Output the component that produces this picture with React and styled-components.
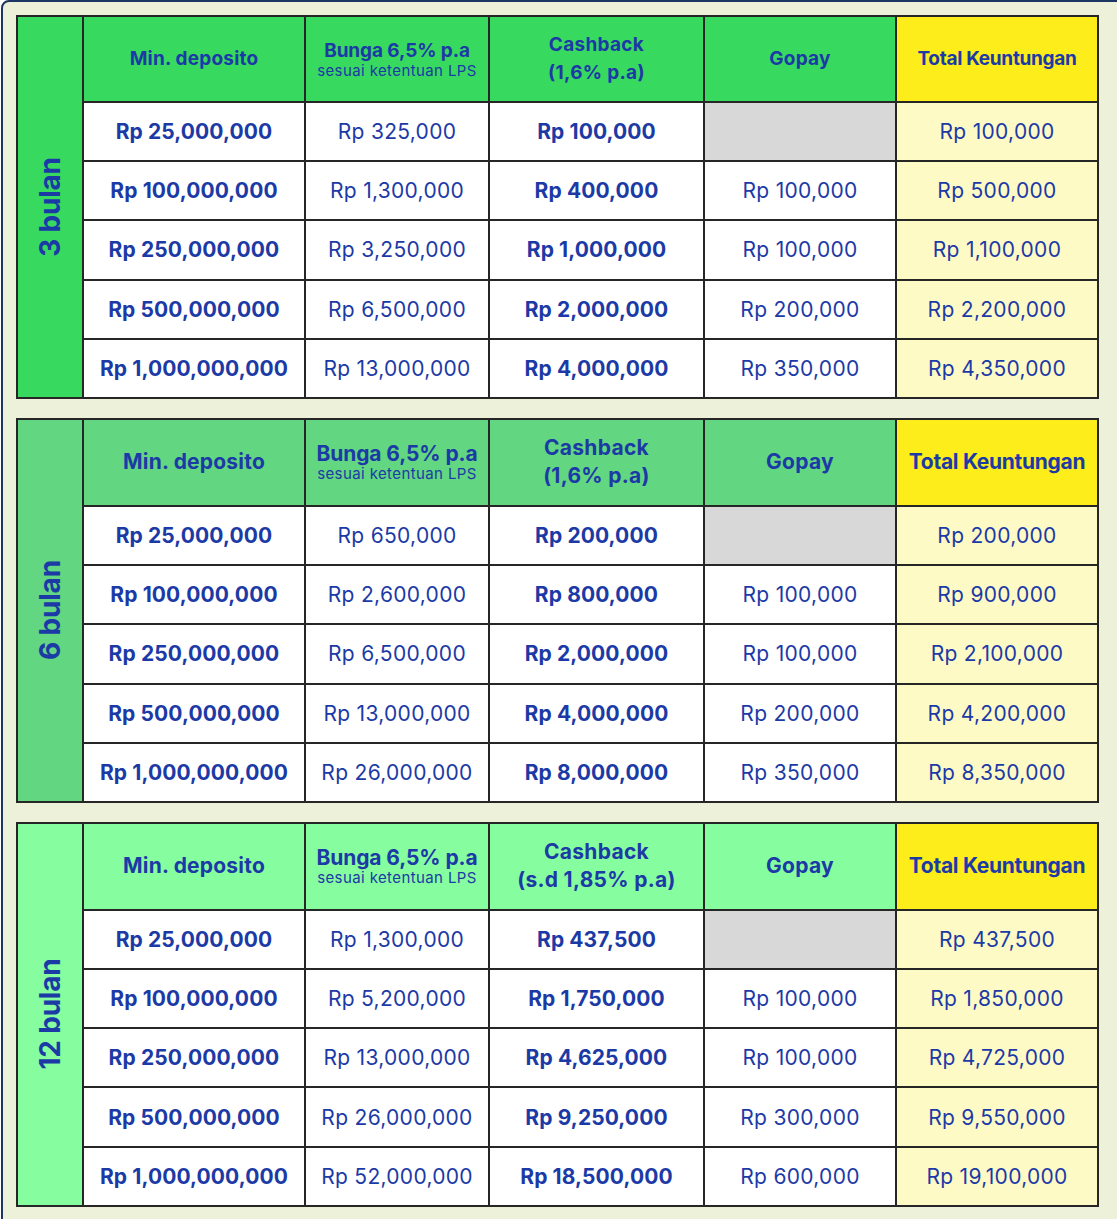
import React from 'react';
import styled, { createGlobalStyle } from 'styled-components';

const GlobalStyle = createGlobalStyle`
	html, body {
		margin: 0;
		padding: 0;
		background: #ffffff;
	}
	body {
		font-family: Inter, 'Noto Sans', 'Liberation Sans', sans-serif;
		color: #1c3aa6;
	}
`;

const Frame = styled.div`
	margin-left: 1px;
	width: 1109px;
	border: 2px solid #1d3563;
	border-radius: 8px;
	background: #edf1d9;
	padding: 13px 0 40px 13px;
	display: flex;
	flex-direction: column;
	gap: 19px;
`;

const Table = styled.div`
	display: grid;
	width: 1083px;
	grid-template-columns: 64px 220px 182px 213px 190px 200px;
	grid-template-rows: ${(p) => p.$head}px repeat(5, 57.2px);
	gap: 2px;
	padding: 2px;
	box-sizing: border-box;
	background: #262626;
`;

const Label = styled.div`
	grid-row: 1 / span 6;
	background: ${(p) => p.$bg};
	display: flex;
	align-items: center;
	justify-content: center;
	overflow: hidden;
`;

const LabelText = styled.span`
	display: block;
	transform: rotate(-90deg);
	white-space: nowrap;
	font-size: 28px;
	font-weight: 700;
	letter-spacing: -0.2px;
`;

const Head = styled.div`
	background: ${(p) => p.$bg};
	display: flex;
	flex-direction: column;
	align-items: center;
	justify-content: center;
	text-align: center;
	font-weight: 700;
	font-size: ${(p) => p.$size}px;
	line-height: 28px;
`;

const HeadLine = styled.span`
	line-height: ${(p) => p.$lh || 28}px;
	letter-spacing: ${(p) => p.$ls || 0}px;
`;

const Sub = styled.span`
	font-size: 15px;
	font-weight: 400;
	line-height: 18px;
	letter-spacing: 0.4px;
`;

const Cell = styled.div`
	background: ${(p) => p.$bg || '#ffffff'};
	display: flex;
	align-items: center;
	justify-content: center;
	font-size: 21px;
	font-weight: ${(p) => (p.$bold ? 700 : 400)};
	letter-spacing: ${(p) => (p.$bold ? 0.1 : 0.3)}px;
	white-space: nowrap;
`;

const tables = [
	{
		label: '3 bulan',
		green: '#38d95f',
		head: 84,
		headSize: 19,
		cashback: '(1,6% p.a)',
		rows: [
			['25,000,000', '325,000', '100,000', null, '100,000'],
			['100,000,000', '1,300,000', '400,000', '100,000', '500,000'],
			['250,000,000', '3,250,000', '1,000,000', '100,000', '1,100,000'],
			['500,000,000', '6,500,000', '2,000,000', '200,000', '2,200,000'],
			['1,000,000,000', '13,000,000', '4,000,000', '350,000', '4,350,000'],
		],
	},
	{
		label: '6 bulan',
		green: '#62d680',
		head: 85,
		headSize: 21,
		cashback: '(1,6% p.a)',
		rows: [
			['25,000,000', '650,000', '200,000', null, '200,000'],
			['100,000,000', '2,600,000', '800,000', '100,000', '900,000'],
			['250,000,000', '6,500,000', '2,000,000', '100,000', '2,100,000'],
			['500,000,000', '13,000,000', '4,000,000', '200,000', '4,200,000'],
			['1,000,000,000', '26,000,000', '8,000,000', '350,000', '8,350,000'],
		],
	},
	{
		label: '12 bulan',
		green: '#86fd9e',
		head: 85,
		headSize: 21,
		cashback: '(s.d 1,85% p.a)',
		rows: [
			['25,000,000', '1,300,000', '437,500', null, '437,500'],
			['100,000,000', '5,200,000', '1,750,000', '100,000', '1,850,000'],
			['250,000,000', '13,000,000', '4,625,000', '100,000', '4,725,000'],
			['500,000,000', '26,000,000', '9,250,000', '300,000', '9,550,000'],
			['1,000,000,000', '52,000,000', '18,500,000', '600,000', '19,100,000'],
		],
	},
];

const YELLOW = '#fced1b';
const PALE = '#fefac6';
const GRAY = '#d8d8d8';

function DepositTable({ t }) {
	return (
		<Table $head={t.head}>
			<Label $bg={t.green}>
				<LabelText>{t.label}</LabelText>
			</Label>
			<Head $bg={t.green} $size={t.headSize}>
				<HeadLine $ls={0.2}>Min. deposito</HeadLine>
			</Head>
			<Head $bg={t.green} $size={t.headSize}>
				<HeadLine $lh={23} $ls={-0.1}>Bunga 6,5% p.a</HeadLine>
				<Sub>sesuai ketentuan LPS</Sub>
			</Head>
			<Head $bg={t.green} $size={t.headSize}>
				<HeadLine $ls={0.3}>Cashback</HeadLine>
				<HeadLine $ls={0.3}>{t.cashback}</HeadLine>
			</Head>
			<Head $bg={t.green} $size={t.headSize}>
				<HeadLine $ls={0.3}>Gopay</HeadLine>
			</Head>
			<Head $bg={YELLOW} $size={t.headSize}>
				<HeadLine $ls={-0.3}>Total Keuntungan</HeadLine>
			</Head>
			{t.rows.map((r) => (
				<React.Fragment key={r[0]}>
					<Cell $bold>Rp {r[0]}</Cell>
					<Cell>Rp {r[1]}</Cell>
					<Cell $bold>Rp {r[2]}</Cell>
					{r[3] ? <Cell>Rp {r[3]}</Cell> : <Cell $bg={GRAY} />}
					<Cell $bg={PALE}>Rp {r[4]}</Cell>
				</React.Fragment>
			))}
		</Table>
	);
}

export default function App() {
	return (
		<>
			<GlobalStyle />
			<Frame>
				{tables.map((t) => (
					<DepositTable key={t.label} t={t} />
				))}
			</Frame>
		</>
	);
}
